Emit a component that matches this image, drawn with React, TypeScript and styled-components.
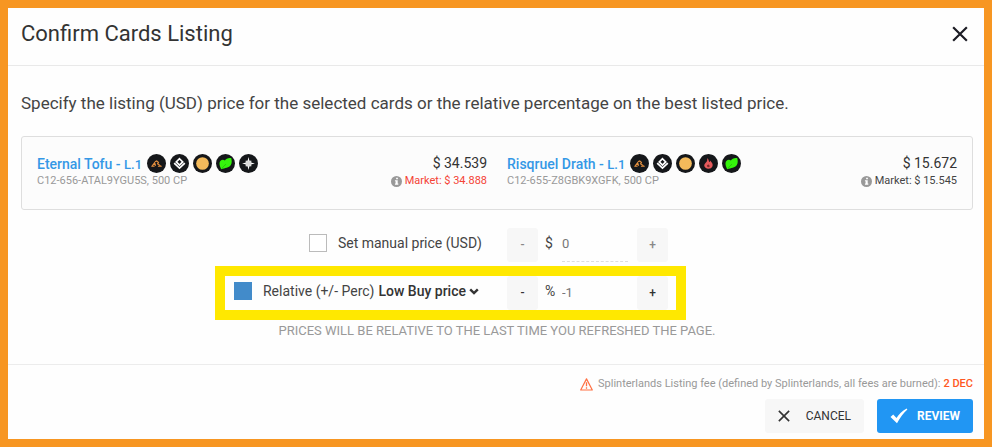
import React, { useState } from "react";
import styled, { createGlobalStyle, css } from "styled-components";

const GlobalStyle = createGlobalStyle`
  *, *::before, *::after { box-sizing: border-box; }
  html, body, #root { height: 100%; }
  body {
    margin: 0;
    background: #f79622;
    color: #333;
    font-family: Roboto, "Liberation Sans", sans-serif;
    font-size: 14px;
  }
  button, input, select { font: inherit; color: inherit; }
`;

const Frame = styled.div`
  display: flex;
  min-height: 100%;
  padding: 8px;
  background: #f79622;
`;

const Dialog = styled.section`
  flex: 1;
  display: flex;
  flex-direction: column;
  background: #fefefe;
`;

const Header = styled.header`
  display: flex;
  align-items: center;
  justify-content: space-between;
  padding: 12px 14px 18px 13px;
  border-bottom: 1px solid #e9e9e9;
`;

const Title = styled.h1`
  margin: 0;
  font-size: 22px;
  line-height: 27px;
  font-weight: 400;
  color: #333;
`;

const CloseButton = styled.button`
  display: flex;
  padding: 2px;
  border: 0;
  background: none;
  color: #1c1c24;
  cursor: pointer;
`;

const Body = styled.div`
  flex: 1;
  padding: 25px 11px 24px 13px;
`;

const Intro = styled.p`
  margin: 0 0 21px;
  font-size: 17px;
  line-height: 24px;
  color: #444;
`;

const CardPanel = styled.div`
  display: grid;
  grid-template-columns: 1fr 1fr;
  column-gap: 20px;
  padding: 16px 15px 21px;
  border: 1px solid #dedede;
  border-radius: 3px;
  background: #fcfcfc;
`;

const CardItem = styled.article`
  display: flex;
  justify-content: space-between;
`;

const CardName = styled.div`
  display: flex;
  align-items: center;
  gap: 5px;
  height: 21px;
`;

const CardLink = styled.a`
  font-size: 14px;
  font-weight: 500;
  color: #3498e6;
  text-decoration: none;
`;

const Level = styled.span`
  font-size: 13px;
`;

const Badges = styled.span`
  display: flex;
  gap: 4px;
`;

const CardCode = styled.div`
  font-size: 11px;
  line-height: 14px;
  color: #999;
`;

const PriceColumn = styled.div`
  text-align: right;
`;

const Price = styled.div`
  height: 21px;
  font-size: 14px;
  line-height: 21px;
  color: #333;
`;

const Market = styled.div<{ $down?: boolean }>`
  display: flex;
  align-items: center;
  justify-content: flex-end;
  gap: 3px;
  font-size: 11px;
  line-height: 14px;
  color: ${(p) => (p.$down ? "#f44336" : "#444")};
`;

const PriceForm = styled.form`
  display: grid;
  row-gap: 14px;
  margin-top: 18px;
`;

const Row = styled.div`
  position: relative;
  display: grid;
  grid-template-columns: 1fr 1fr;
  column-gap: 20px;
  align-items: center;
`;

const Highlight = styled.span`
  position: absolute;
  top: -10px;
  bottom: -10px;
  left: calc(50% - 282px);
  width: 471px;
  border: 10px solid #ffe800;
  pointer-events: none;
`;

const LabelSide = styled.div`
  display: flex;
  align-items: center;
  justify-content: flex-end;
  padding: 0 5px 4px 0;
`;

const Check = styled.input`
  appearance: none;
  width: 18px;
  height: 18px;
  margin: 0 11px 0 0;
  border: 1px solid #bbb;
  background: #fff;
  cursor: pointer;

  &:checked {
    border-color: #428bca;
    background: #428bca;
  }
`;

const OptionLabel = styled.label`
  font-size: 14px;
  line-height: 20px;
  color: #444;
`;

const BaseSelect = styled.select`
  appearance: none;
  field-sizing: content;
  margin: 0 3px 0 4px;
  padding: 0;
  border: 0;
  background: none;
  font-size: 14px;
  line-height: 20px;
  font-weight: 500;
  color: #333;
`;

const Stepper = styled.div`
  display: flex;
  align-items: center;
`;

const StepButton = styled.button<{ $muted?: boolean }>`
  width: 31px;
  height: 34px;
  padding: 0;
  border: 0;
  border-radius: 3px;
  background: #f7f7f7;
  font-size: 12px;
  font-weight: 500;
  color: ${(p) => (p.$muted ? "#888" : "#333")};
  cursor: pointer;
`;

const Unit = styled.span`
  width: 17px;
  margin-left: 7px;
  padding-bottom: 4px;
  font-size: 14px;
  color: #444;
`;

const Amount = styled.input<{ $muted?: boolean }>`
  width: 66px;
  height: 34px;
  margin-right: 9px;
  padding: 0 0 2px;
  border: 0;
  background: none;
  font-size: 13px;
  color: #777;
  outline: none;
  ${(p) => p.$muted && css`border-bottom: 1px dashed #ddd;`}
`;

const Notice = styled.p`
  margin: 13px 0 0;
  font-size: 13px;
  line-height: 16px;
  text-align: center;
  text-transform: uppercase;
  color: #999;
`;

const Footer = styled.footer`
  padding: 11px 11px 6px;
  border-top: 1px solid #ececec;
`;

const Fee = styled.p`
  display: flex;
  align-items: center;
  justify-content: flex-end;
  margin: 0 0 7px;
  font-size: 11px;
  line-height: 16px;
  color: #999;
`;

const FeeText = styled.span`
  margin: 0 3px 0 5px;
`;

const FeeAmount = styled.strong`
  font-weight: 500;
  color: #ff5722;
`;

const Actions = styled.div`
  display: flex;
  justify-content: flex-end;
  gap: 13px;
`;

const ActionButton = styled.button<{ $primary?: boolean }>`
  display: flex;
  align-items: center;
  justify-content: space-between;
  width: ${(p) => (p.$primary ? "96px" : "99px")};
  height: 34px;
  padding: 0 13px;
  border: 0;
  border-radius: 3px;
  background: ${(p) => (p.$primary ? "#2196f3" : "#f7f7f7")};
  color: ${(p) => (p.$primary ? "#fff" : "#333")};
  font-size: 12px;
  font-weight: ${(p) => (p.$primary ? 700 : 400)};
  text-transform: uppercase;
  cursor: pointer;
`;

type BadgeKind = "kiln" | "diamond" | "coin" | "leaf" | "star" | "flame";

const glyphs: Record<BadgeKind, React.ReactNode> = {
  kiln: (
    <g fill="none" stroke="#e5903f" strokeWidth="1.3">
      <path d="M5.5 12.4 8 9.3l1 3M8.5 8.2l1.7-.9 1.8 1.5-.8 1.5 3 2.2" />
      <path d="M4.5 12.9H8M11.5 12.9h4" />
    </g>
  ),
  diamond: (
    <g fill="none" stroke="#fff" strokeWidth="1.8">
      <path d="m10 5 3.4 3.3-3.400 3.300L6.600 8.300Z" />
      <path d="m4.400 9.600 5.600 5.200 5.600-5.200" />
    </g>
  ),
  coin: <circle cx="10" cy="10" r="6.7" fill="#f3ba5b" />,
  leaf: (
    <g>
      <path d="M5.600 16C4 13 2.800 9.300 4.600 7.300c1.400-1.500 3.500-1.400 4.800-.5C10.400 4.600 13 3.800 16 4.200c.7 2.600.9 5.300-.4 7.300-2 3-6 3.100-10 4.500Z" fill="#35f40c" />
      <path d="M6.200 15c1.400-1.400 2.800-2.600 4.200-4.400" fill="none" stroke="#1fae0a" strokeWidth=".7" />
    </g>
  ),
  star: (
    <g fill="#fff">
      <path d="m10 3.200 1.300 5.500 5.500 1.300-5.500 1.300L10 16.800l-1.300-5.500L3.200 10l5.500-1.300Z" />
      <path d="M7 7h6v6H7Z" fill="#ddd" />
    </g>
  ),
  flame: (
    <g>
      <path d="M8.500 4.400c2.400 1.500 1.400 3.200 2.500 4 .7-.3.7-1 .7-1.600 1.700 2 3.400 3.900 2.500 6.200-.7 1.800-2.300 2.600-4.200 2.600-2.400 0-4.400-1.300-4.500-3.400 0-2.300 2.100-3 2.700-4.300.5-1.100.7-2.200.3-3.500Z" fill="#e45a5c" />
      <path d="M8.300 12.600c.4-1 .9-.8 1.300-1.700.6.6 2 1.100 1.600 2.300-.4 1-2.700.8-2.900-.6Z" fill="#7a2a2a" />
    </g>
  ),
};

const Badge = ({ kind }: { kind: BadgeKind }) => (
  <svg width="19" height="19" viewBox="0 0 20 20" aria-hidden="true">
    <circle cx="10" cy="10" r="10" fill="#15171a" />
    {glyphs[kind]}
  </svg>
);

const InfoIcon = () => (
  <svg width="11" height="11" viewBox="0 0 12 12" aria-hidden="true">
    <circle cx="6" cy="6" r="6" fill="#999" />
    <path d="M5.600 1.800h1.900v1.700H5.600ZM4.300 4.600h3v3.700h.7v1.200H4.300V8.300H5V5.800h-.7Z" fill="#fff" />
  </svg>
);

const CrossIcon = ({ size }: { size: number }) => (
  <svg width={size} height={size} viewBox="0 0 14 14" aria-hidden="true">
    <path d="m1 1 12 12M13 1 1 13" fill="none" stroke="currentColor" strokeWidth="1.9" />
  </svg>
);

const TickIcon = () => (
  <svg width="18" height="16" viewBox="0 0 18 16" aria-hidden="true">
    <path d="M.5 9 3.200 6.500l3.300 3.400C9 6.200 12 3.200 16.600.6l.8.9C13.600 5 10 9.400 7 15.300Z" fill="currentColor" />
  </svg>
);

const WarningIcon = () => (
  <svg width="13" height="13" viewBox="0 0 13 13" aria-hidden="true">
    <path d="M6.500.9 12.300 12H.7Z" fill="none" stroke="#ff7043" strokeWidth="1.2" strokeLinejoin="round" />
    <path d="M6.500 4.300v4M6.500 9.300v1.500" stroke="#ff7043" strokeWidth="1.3" />
  </svg>
);

const ChevronIcon = () => (
  <svg width="13" height="7" viewBox="0 0 13 7" aria-hidden="true">
    <path d="m1.200 1.300 3.800 3.700 3.800-3.700" fill="none" stroke="#333" strokeWidth="2.4" />
  </svg>
);

interface Card {
  name: string;
  code: string;
  badges: BadgeKind[];
  price: string;
  market: string;
  down?: boolean;
}

const cards: Card[] = [
  {
    name: "Eternal Tofu",
    code: "C12-656-ATAL9YGU5S, 500 CP",
    badges: ["kiln", "diamond", "coin", "leaf", "star"],
    price: "$ 34.539",
    market: "Market: $ 34.888",
    down: true,
  },
  {
    name: "Risqruel Drath",
    code: "C12-655-Z8GBK9XGFK, 500 CP",
    badges: ["kiln", "diamond", "coin", "flame", "leaf"],
    price: "$ 15.672",
    market: "Market: $ 15.545",
  },
];

export default function App() {
  const [mode, setMode] = useState<"manual" | "relative">("relative");
  const [manual, setManual] = useState("0");
  const [relative, setRelative] = useState("-1");

  const step = (value: string, by: number) => String((Number(value) || 0) + by);

  return (
    <>
      <GlobalStyle />
      <Frame>
        <Dialog role="dialog" aria-labelledby="dialog-title">
          <Header>
            <Title id="dialog-title">Confirm Cards Listing</Title>
            <CloseButton type="button" aria-label="Close">
              <CrossIcon size={16} />
            </CloseButton>
          </Header>
          <Body>
            <Intro>
              Specify the listing (USD) price for the selected cards or the relative percentage on the best listed
              price.
            </Intro>
            <CardPanel>
              {cards.map((card) => (
                <CardItem key={card.code}>
                  <div>
                    <CardName>
                      <CardLink href="#">
                        {card.name} - <Level>L.1</Level>
                      </CardLink>
                      <Badges>
                        {card.badges.map((kind) => (
                          <Badge key={kind} kind={kind} />
                        ))}
                      </Badges>
                    </CardName>
                    <CardCode>{card.code}</CardCode>
                  </div>
                  <PriceColumn>
                    <Price>{card.price}</Price>
                    <Market $down={card.down}>
                      <InfoIcon />
                      {card.market}
                    </Market>
                  </PriceColumn>
                </CardItem>
              ))}
            </CardPanel>
            <PriceForm>
              <Row>
                <LabelSide>
                  <Check
                    id="manual"
                    type="checkbox"
                    checked={mode === "manual"}
                    onChange={() => setMode("manual")}
                  />
                  <OptionLabel htmlFor="manual">Set manual price (USD)</OptionLabel>
                </LabelSide>
                <Stepper>
                  <StepButton type="button" $muted onClick={() => setManual(step(manual, -1))}>-</StepButton>
                  <Unit>$</Unit>
                  <Amount
                    $muted
                    aria-label="Manual price"
                    value={manual}
                    onChange={(e) => setManual(e.target.value)}
                  />
                  <StepButton type="button" $muted onClick={() => setManual(step(manual, 1))}>+</StepButton>
                </Stepper>
              </Row>
              <Row>
                <LabelSide>
                  <Check
                    id="relative"
                    type="checkbox"
                    checked={mode === "relative"}
                    onChange={() => setMode("relative")}
                  />
                  <OptionLabel htmlFor="relative">Relative (+/- Perc)</OptionLabel>
                  <BaseSelect aria-label="Base price">
                    <option>Low Buy price</option>
                  </BaseSelect>
                  <ChevronIcon />
                </LabelSide>
                <Stepper>
                  <StepButton type="button" onClick={() => setRelative(step(relative, -1))}>-</StepButton>
                  <Unit>%</Unit>
                  <Amount
                    aria-label="Relative percentage"
                    value={relative}
                    onChange={(e) => setRelative(e.target.value)}
                  />
                  <StepButton type="button" onClick={() => setRelative(step(relative, 1))}>+</StepButton>
                </Stepper>
                <Highlight />
              </Row>
            </PriceForm>
            <Notice>Prices will be relative to the last time you refreshed the page.</Notice>
          </Body>
          <Footer>
            <Fee>
              <WarningIcon />
              <FeeText>Splinterlands Listing fee (defined by Splinterlands, all fees are burned):</FeeText>
              <FeeAmount>2 DEC</FeeAmount>
            </Fee>
            <Actions>
              <ActionButton type="button">
                <CrossIcon size={12} />
                Cancel
              </ActionButton>
              <ActionButton type="button" $primary>
                <TickIcon />
                Review
              </ActionButton>
            </Actions>
          </Footer>
        </Dialog>
      </Frame>
    </>
  );
}
